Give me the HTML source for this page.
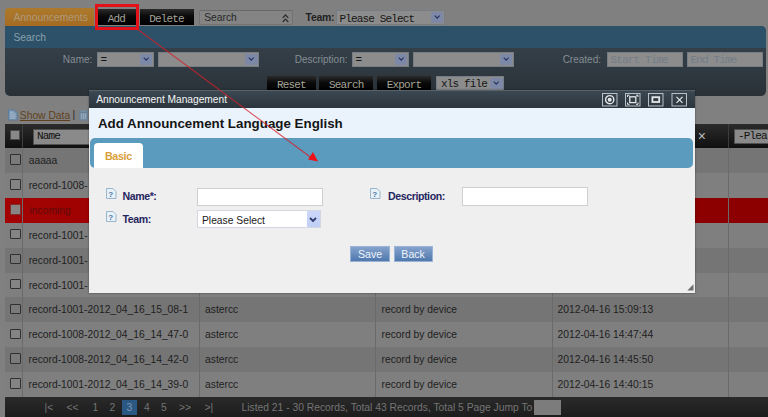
<!DOCTYPE html>
<html><head><meta charset="utf-8">
<style>
*{box-sizing:border-box;margin:0;padding:0}
html,body{width:768px;height:417px;overflow:hidden;background:#808080;font-family:"Liberation Sans",sans-serif;font-size:10.3px}
.abs{position:absolute;white-space:nowrap}
.mono{font-family:"Liberation Mono",monospace;font-size:11px;letter-spacing:-0.85px}
.btnk{position:absolute;background:linear-gradient(#2b2b2b,#0a0a0a 45%,#000);color:#a3a396;text-align:center;height:15.5px;line-height:16.6px;top:9px}
.sel{position:absolute;background:#8c8c8c;border:1px solid #767d84;height:14.8px;line-height:15.6px;color:#151515;padding-left:3px;white-space:nowrap;overflow:hidden}
.sel i{position:absolute;right:0.3px;top:0.5px;width:12.3px;height:11.6px;background:#7d87a6;border-radius:1.5px}
.sel i:after{content:"";position:absolute;left:3.6px;top:2.7px;width:3.4px;height:3.4px;border-right:1.9px solid #1c2d62;border-bottom:1.9px solid #1c2d62;transform:rotate(45deg)}
.lbl{position:absolute;color:#858e95;text-align:right;top:53.3px;line-height:14px;font-size:10px}
.row{position:absolute;left:5px;width:763px;height:25px;color:#1e1e1e;font-size:10.3px;line-height:26.5px}
.row span{position:absolute;top:0;white-space:nowrap}
.row b{position:absolute;left:5px;top:6.3px;width:10.5px;height:10.5px;border:1px solid #303030;background:rgba(255,255,255,.04);border-radius:1px}
.ev{background:#757575}.od{background:#7f7f7f}
.vl{position:absolute;top:148px;height:249px;width:1px;background:#6a6a6a}
.ft span{position:absolute;top:0}
</style></head><body>
<!-- top toolbar -->
<div class="abs" style="left:5px;top:8px;width:88.5px;height:18.5px;background:linear-gradient(#ad7a2d,#a46a21);border-radius:4px 0 0 0;color:#ad9a7c;line-height:20px;padding-left:8.4px">Announcements</div>
<div class="btnk mono" style="left:97px;width:39px;line-height:21px">Add</div>
<div class="btnk mono" style="left:139.5px;width:54px;line-height:21px">Delete</div>
<div class="abs" style="left:199px;top:10px;width:94.2px;height:14.8px;background:#848484;border:1px solid #727272;border-top-color:#686868;border-radius:2px;color:#282828;line-height:14.2px;padding-left:4.2px">Search<svg class="abs" style="right:3.2px;top:3px" width="7" height="9" viewBox="0 0 7 9"><path d="M0.7 3.9 L3.5 1 L6.3 3.9 M0.7 8 L3.5 5.1 L6.3 8" fill="none" stroke="#2c2c2c" stroke-width="1.25"/></svg></div>
<div class="abs" style="left:305.5px;top:11.2px;font-weight:bold;color:#222;font-size:10.4px;line-height:14px;letter-spacing:-0.2px">Team:</div>
<div class="sel mono" style="left:335.5px;top:10px;width:109px;line-height:17px">Please Select<i></i></div>
<!-- search panel -->
<div class="abs" style="left:5px;top:26px;width:761px;height:70px;background:linear-gradient(#343f48 30%,#2a3238);border-radius:0 5px 5px 5px"></div>
<div class="abs" style="left:5px;top:26px;width:761px;height:22.3px;background:#2c5168;border-radius:0 5px 0 0;color:#8aa0ae;line-height:23px;padding-left:8.4px">Search</div>
<div class="lbl" style="left:40px;width:52.3px">Name:</div>
<div class="sel mono" style="left:96.5px;top:52.2px;width:57px">=<i></i></div>
<div class="sel" style="left:158px;top:52.2px;width:101px"><i></i></div>
<div class="lbl" style="left:270px;width:77.5px">Description:</div>
<div class="sel mono" style="left:351.5px;top:52.2px;width:57px">=<i></i></div>
<div class="sel" style="left:412.5px;top:52.2px;width:101px"><i></i></div>
<div class="lbl" style="left:540px;width:61px">Created:</div>
<div class="sel mono" style="left:606.5px;top:52.2px;width:76px;color:#727d88">Start Time</div>
<div class="sel mono" style="left:686.5px;top:52.2px;width:76px;color:#727d88">End Time</div>
<div class="btnk mono" style="left:267px;top:75.5px;width:49px;line-height:19px">Reset</div>
<div class="btnk mono" style="left:319.3px;top:75.5px;width:54px;line-height:19px">Search</div>
<div class="btnk mono" style="left:377px;top:75.5px;width:54px;line-height:19px">Export</div>
<div class="sel mono" style="left:436px;top:76px;width:68px;padding-left:4px">xls file<i></i></div>
<div class="abs" style="left:94.5px;top:3.5px;width:44px;height:26px;border:3px solid #e31219"></div>
<!-- show data -->
<svg class="abs" style="left:7.6px;top:108.8px" width="10" height="12" viewBox="0 0 10 12"><path d="M0.5 0.8 H6 L9.2 3.8 V11 H0.5 Z" fill="#7a96b0" stroke="#587a9b" stroke-width=".9"/><path d="M2 3.2H5.5M2 5.2H7.6M2 7.2H7.6M2 9.2H7.6" stroke="#aebfce" stroke-width=".9"/></svg>
<div class="abs" style="left:19.8px;top:108.8px;font-size:10.3px;line-height:14px;color:#60401a"><u>Show Data</u></div>
<div class="abs" style="left:72.5px;top:107.5px;font-size:10.3px;line-height:14px;color:#2a2a2a">|</div>
<svg class="abs" style="left:78px;top:108.6px" width="11" height="12" viewBox="0 0 11 12"><path d="M1.2 3.4H9.8L9 11.2H2Z" fill="#778fa6" stroke="#667f95" stroke-width=".8"/><path d="M0.6 2.8Q5.5 -0.6 10.4 2.8Z" fill="#8aa0b4" stroke="#667f95" stroke-width=".7"/><path d="M3.6 4.6V10M5.5 4.6V10M7.4 4.6V10" stroke="#9fb2c2" stroke-width=".8"/></svg>
<!-- table -->
<div class="abs" style="left:5px;top:123.8px;width:763px;height:24.2px;background:linear-gradient(#2b2b2b,#101010)"></div>
<div class="abs" style="left:21.5px;top:124px;width:1px;height:24px;background:#3c3c3c"></div>
<div class="abs" style="left:10px;top:129.8px;width:10px;height:10px;background:#888;border:1px solid #4a4a4a"></div>
<div class="abs mono" style="left:33px;top:129px;width:166px;height:15.5px;background:#8a8a8a;border:1px solid #505050;line-height:13.5px;padding-left:3px;color:#111">Name</div>
<div class="abs" style="left:697.8px;top:127px;color:#bbb;font-size:14px;line-height:18px">&#xd7;</div>
<div class="abs" style="left:728px;top:124px;width:1px;height:24px;background:#3c3c3c"></div>
<div class="abs mono" style="left:734px;top:129.3px;width:40px;height:15px;background:#8a8a8a;border:1px solid #505050;line-height:13px;padding-left:3px;color:#111">-Plea</div>
<div class="row ev" style="top:148px"><b></b><span style="left:23.7px">aaaaa</span></div>
<div class="row od" style="top:172.9px"><b></b><span style="left:23.7px">record-1008-</span></div>
<div class="row" style="top:197.8px;background:linear-gradient(90deg,#a30303,#9f0202 12%,#8c0000 90%)"><b style="background:#8a8585;border-color:#7d3030"></b><span style="left:24.5px;color:#5e0c0c">incoming</span></div>
<div class="row od" style="top:222.7px"><b></b><span style="left:23.7px">record-1001-</span></div>
<div class="row ev" style="top:247.6px"><b></b><span style="left:23.7px">record-1001-</span></div>
<div class="row od" style="top:272.5px"><b></b><span style="left:23.7px">record-1001-</span></div>
<div class="row ev" style="top:297.4px"><b></b><span style="left:23.5px">record-1001-2012_04_16_15_08-1</span><span style="left:200px">astercc</span><span style="left:376.5px">record by device</span><span style="left:552.5px">2012-04-16 15:09:13</span></div>
<div class="row od" style="top:322.3px"><b></b><span style="left:23.5px">record-1008-2012_04_16_14_47-0</span><span style="left:200px">astercc</span><span style="left:376.5px">record by device</span><span style="left:552.5px">2012-04-16 14:47:44</span></div>
<div class="row ev" style="top:347.2px"><b></b><span style="left:23.5px">record-1008-2012_04_16_14_42-0</span><span style="left:200px">astercc</span><span style="left:376.5px">record by device</span><span style="left:552.5px">2012-04-16 14:45:50</span></div>
<div class="row od" style="top:372.1px"><b></b><span style="left:23.5px">record-1001-2012_04_16_14_39-0</span><span style="left:200px">astercc</span><span style="left:376.5px">record by device</span><span style="left:552.5px">2012-04-16 14:40:15</span></div>
<div class="vl" style="left:21.5px"></div><div class="vl" style="left:199px"></div><div class="vl" style="left:375px"></div><div class="vl" style="left:552px"></div><div class="vl" style="left:728px"></div>
<!-- footer -->
<div class="abs ft" style="left:5px;top:397px;width:763px;height:20px;background:linear-gradient(#2a2a2a,#1c1c1c);color:#757575;font-size:10.3px;line-height:21px">
<span style="left:39.5px">|&lt;</span><span style="left:61.5px">&lt;&lt;</span><span style="left:87.5px">1</span><span style="left:104.5px">2</span>
<span style="left:117px;top:2.6px;width:14.5px;height:15.2px;background:#2b5882;color:#7896b2;text-align:center;line-height:16px">3</span>
<span style="left:139px">4</span><span style="left:156px">5</span><span style="left:174px">&gt;&gt;</span><span style="left:199.5px">&gt;|</span>
<span style="left:236.5px;white-space:nowrap">Listed 21 - 30 Records, Total 43 Records, Total 5 Page Jump To</span>
<span style="left:528.5px;top:2.6px;width:27px;height:15.2px;background:#7c7c7c"></span>
</div>
<!-- dialog -->
<div class="abs" style="left:88.6px;top:89.8px;width:606.6px;height:203px;background:#efefef;box-shadow:0 0 2px rgba(0,0,0,.45)">
 <div class="abs" style="left:0;top:0;width:606.6px;height:18.2px;border-top:1px solid #56626c;background:linear-gradient(#3b4852,#2b353d);color:#f4f4f4;font-size:10.2px;line-height:17px;padding-left:7.6px">Announcement Management</div>
 <svg class="abs" style="left:513.3px;top:3.4px" width="86" height="14" viewBox="0 0 86 14" fill="none" stroke="#e4e8ea">
  <rect x="0.5" y="0.5" width="14.5" height="12.5" stroke="#b9c0c5"/><circle cx="7.7" cy="6.7" r="4.1" stroke-width="1.4"/><circle cx="7.7" cy="6.7" r="2" fill="#e4e8ea" stroke="none"/>
  <rect x="23.5" y="0.5" width="14.5" height="12.5" stroke="#b9c0c5"/><rect x="27.8" y="3.8" width="6" height="5.8" stroke-width="1.3"/><path d="M25.5 4V2.2H27.5M34 2.2H36V4M36 9.5V11.3H34M27.5 11.3H25.5V9.5" stroke-width="1"/>
  <rect x="46.5" y="0.5" width="14.5" height="12.5" stroke="#b9c0c5"/><rect x="50.4" y="4.2" width="6.8" height="4.8" stroke-width="1.8"/>
  <rect x="70" y="0.5" width="14.5" height="12.5" stroke="#b9c0c5"/><path d="M74.5 3.8L80.5 9.8M80.5 3.8L74.5 9.8" stroke-width="1.2"/>
 </svg>
 <div class="abs" style="left:0;top:18.2px;width:606.6px;height:30px;background:#eaf3fc"></div>
 <div class="abs" style="left:9.3px;top:24.8px;font-size:13.35px;font-weight:bold;color:#151515;line-height:18px">Add Announcement Language English</div>
 <div class="abs" style="left:1.6px;top:48px;width:602.7px;height:30.2px;background:#5b9bbe;border-radius:5px"></div>
 <div class="abs" style="left:5.5px;top:52.8px;width:48.5px;height:25.4px;background:#fff;border-radius:4px 4px 0 0;color:#d99e38;font-weight:bold;font-size:10.7px;letter-spacing:-0.35px;line-height:26px;text-align:center">Basic</div>
 <!-- form -->
 <svg class="abs" style="left:17px;top:98.6px" width="11" height="11" viewBox="0 0 11 11"><path d="M.5 .5H7L10 3.5V10.5H.5Z" fill="#e8f1f8" stroke="#9ab6cc"/><text x="2.3" y="9" font-size="8" font-weight="bold" fill="#4a78a8" font-family="Liberation Sans,sans-serif">?</text></svg>
 <div class="abs" style="left:33.9px;top:98.8px;font-weight:bold;color:#26265f;font-size:10.6px;letter-spacing:-0.42px;line-height:14px">Name*:</div>
 <div class="abs" style="left:108.4px;top:97.8px;width:126.2px;height:18.6px;background:#fff;border:1px solid #cfcfcf"></div>
 <svg class="abs" style="left:281.4px;top:98.6px" width="11" height="11" viewBox="0 0 11 11"><path d="M.5 .5H7L10 3.5V10.5H.5Z" fill="#e8f1f8" stroke="#9ab6cc"/><text x="2.3" y="9" font-size="8" font-weight="bold" fill="#4a78a8" font-family="Liberation Sans,sans-serif">?</text></svg>
 <div class="abs" style="left:299.5px;top:98.8px;font-weight:bold;color:#26265f;font-size:10.6px;letter-spacing:-0.42px;line-height:14px">Description:</div>
 <div class="abs" style="left:373.4px;top:97px;width:126.4px;height:19px;background:#fff;border:1px solid #cfcfcf"></div>
 <svg class="abs" style="left:17px;top:121.4px" width="11" height="11" viewBox="0 0 11 11"><path d="M.5 .5H7L10 3.5V10.5H.5Z" fill="#e8f1f8" stroke="#9ab6cc"/><text x="2.3" y="9" font-size="8" font-weight="bold" fill="#4a78a8" font-family="Liberation Sans,sans-serif">?</text></svg>
 <div class="abs" style="left:33.9px;top:122px;font-weight:bold;color:#26265f;font-size:10.6px;letter-spacing:-0.42px;line-height:14px">Team:</div>
 <div class="abs" style="left:108.4px;top:120.7px;width:123.6px;height:17.8px;background:#fff;border:1px solid #d3d8e0;font-size:10.3px;line-height:19.2px;padding-left:4px;color:#1a1a1a">Please Select<i class="abs" style="right:0;top:0;width:12.6px;height:15.8px;background:linear-gradient(#ccd8fa,#c0cef6);border-radius:1px"></i><svg class="abs" style="right:2.4px;top:5.4px" width="8" height="6" viewBox="0 0 8 6"><path d="M1 1L4 4L7 1" fill="none" stroke="#2c3c6c" stroke-width="1.8"/></svg></div>
 <div class="abs" style="left:261.4px;top:156.7px;width:40.3px;height:15.5px;background:linear-gradient(#84a2cc,#4f78ad);border:1px solid #9ab2d4;color:#f0f4fa;font-size:10.6px;line-height:14.5px;text-align:center">Save</div>
 <div class="abs" style="left:305px;top:156.7px;width:39px;height:15.5px;background:linear-gradient(#84a2cc,#4f78ad);border:1px solid #9ab2d4;color:#f0f4fa;font-size:10.6px;line-height:14.5px;text-align:center">Back</div>
 <svg class="abs" style="left:598.5px;top:194px" width="7" height="7" viewBox="0 0 7 7"><path d="M6.5 0.3V6.5H0.3Z" fill="#6e6e6e"/></svg>
</div>
<!-- arrow -->
<svg class="abs" style="left:0;top:0" width="768" height="417"><line x1="137.5" y1="29.2" x2="311.3" y2="157.8" stroke="#d5202a" stroke-opacity=".8" stroke-width="1.1"/><polygon points="318,161.5 308,159.6 313,152" fill="#ee1118"/></svg>
</body></html>
